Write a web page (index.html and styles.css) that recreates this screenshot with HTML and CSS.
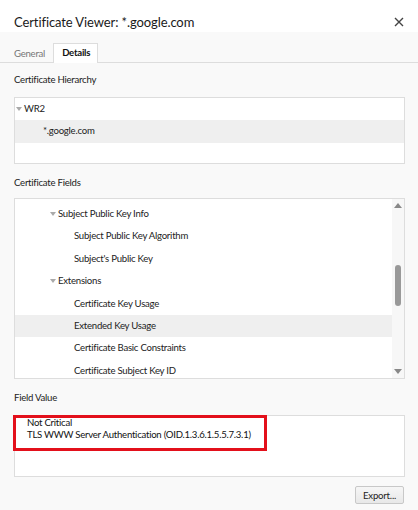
FILE: index.html
```html
<!DOCTYPE html>
<html lang="en">
<head>
  <meta charset="UTF-8">
  <meta name="viewport" content="width=device-width, initial-scale=1.0">
  <title>Certificate Viewer</title>
  <link rel="stylesheet" href="styles.css">
</head>
<body>

  <div class="titlebar">
    <h1>Certificate Viewer: *.google.com</h1>
    <button class="close" aria-label="Close">
      <svg width="10" height="10" viewBox="0 0 10 10"><path d="M1 1L9 9M9 1L1 9" stroke="#444" stroke-width="1.4"/></svg>
    </button>
  </div>

  <div class="tabs">
    <span class="tab">General</span>
    <span class="tab active">Details</span>
  </div>

  <div class="content">
    <div class="label first">Certificate Hierarchy</div>
    <div class="box hierarchy">
      <div class="row lvl0"><span class="twisty"></span>WR2</div>
      <div class="row lvl1 selected">*.google.com</div>
    </div>

    <div class="label">Certificate Fields</div>
    <div class="box fields">
      <div class="list">
        <div class="row lvl2"><span class="twisty"></span>Subject Public Key Info</div>
        <div class="row lvl3">Subject Public Key Algorithm</div>
        <div class="row lvl3">Subject's Public Key</div>
        <div class="row lvl2"><span class="twisty"></span>Extensions</div>
        <div class="row lvl3">Certificate Key Usage</div>
        <div class="row lvl3 selected">Extended Key Usage</div>
        <div class="row lvl3">Certificate Basic Constraints</div>
        <div class="row lvl3">Certificate Subject Key ID</div>
      </div>
      <div class="scrollbar">
        <span class="arrow up"></span>
        <span class="thumb"></span>
        <span class="arrow down"></span>
      </div>
    </div>

    <div class="label">Field Value</div>
    <div class="box value">
      <div class="line">Not Critical</div>
      <div class="line">TLS WWW Server Authentication (OID.1.3.6.1.5.5.7.3.1)</div>
      <div class="callout"></div>
    </div>

    <div class="actions">
      <button class="export">Export...</button>
    </div>
  </div>

</body>
</html>
```

FILE: styles.css
```css
* {
  margin: 0;
  padding: 0;
  box-sizing: border-box;
}

body {
  font-family: 'Lato', sans-serif;
  font-size: 9.6px;
  letter-spacing: -0.25px;
  color: #222;
  background: #f9f9f9;
  width: 418px;
  height: 510px;
  overflow: hidden;
}

/* Title bar */
.titlebar {
  height: 32px;
  background: #fff;
  display: flex;
  align-items: center;
  justify-content: space-between;
  padding: 12px 12px 0 14px;
}

.titlebar h1 {
  font-size: 13px;
  font-weight: 400;
  color: #1a1a1a;
  line-height: 20px;
  letter-spacing: -0.1px;
}

.close {
  border: none;
  background: none;
  width: 14px;
  height: 14px;
  display: flex;
  align-items: center;
  justify-content: center;
}

/* Tabs */
.tabs {
  display: flex;
  align-items: flex-end;
  height: 31px;
  padding-left: 4px;
  border-bottom: 1px solid #ddd;
}

.tab {
  height: 19px;
  line-height: 18px;
  padding: 0 7px 0 9px;
  color: #777;
  border: 1px solid transparent;
  border-bottom: none;
  margin-bottom: -1px;
}

.tab.active {
  background: #fff;
  border-color: #ddd;
  color: #111;
  font-weight: 700;
  height: 20px;
  padding: 0 7px 0 8px;
}

/* Content */
.content {
  padding: 0 13px 0 14px;
}

.label {
  line-height: 16px;
  margin-top: 11px;
  color: #222;
}

.label.first {
  margin-top: 9px;
}

.box {
  background: #fff;
  border: 1px solid #ddd;
  margin-top: 8px;
}

.hierarchy {
  height: 67px;
  margin-top: 9px;
}

.row {
  height: 22.4px;
  line-height: 22.4px;
  white-space: nowrap;
  display: flex;
  align-items: center;
  color: #222;
}

.row.selected {
  background: #efefef;
}

.lvl0 { padding-left: 1px; }
.lvl1 { padding-left: 28px; }
.lvl2 { padding-left: 35px; }
.lvl3 { padding-left: 59px; }

.twisty {
  width: 0;
  height: 0;
  border-left: 3px solid transparent;
  border-right: 3px solid transparent;
  border-top: 4px solid #aaa;
  margin: 0 2px 0 0;
}

/* Fields list with scrollbar */
.fields {
  height: 181px;
  display: flex;
  margin-top: 7px;
  overflow: hidden;
}

.fields .list {
  flex: 1;
  padding-top: 4px;
}

.scrollbar {
  width: 12px;
  background: #f7f7f7;
  display: flex;
  flex-direction: column;
  align-items: center;
  padding: 4px 0 4px;
}

.arrow {
  width: 0;
  height: 0;
  border-left: 4px solid transparent;
  border-right: 4px solid transparent;
}

.arrow.up {
  border-bottom: 5px solid #888;
}

.arrow.down {
  border-top: 5px solid #888;
  margin-top: auto;
}

.thumb {
  width: 6px;
  height: 41px;
  border-radius: 3px;
  background: #999;
  margin-top: 57px;
}

/* Field value */
.value {
  height: 62px;
  position: relative;
  padding: 1px 0 0 12px;
  margin-top: 9px;
}

.value .line {
  line-height: 12px;
  color: #111;
}

.callout {
  position: absolute;
  left: -2px;
  top: -1px;
  width: 254px;
  height: 36px;
  border: 3px solid #e3101b;
}

.actions {
  display: flex;
  justify-content: flex-end;
  margin-top: 9px;
  padding-right: 1px;
}

.export {
  font-family: 'Lato', sans-serif;
  font-size: 9.6px;
  letter-spacing: -0.2px;
  color: #222;
  width: 49px;
  height: 18px;
  background: linear-gradient(#f6f6f6, #e8e8e8);
  border: 1px solid #c8c8c8;
  border-radius: 2px;
}
```
